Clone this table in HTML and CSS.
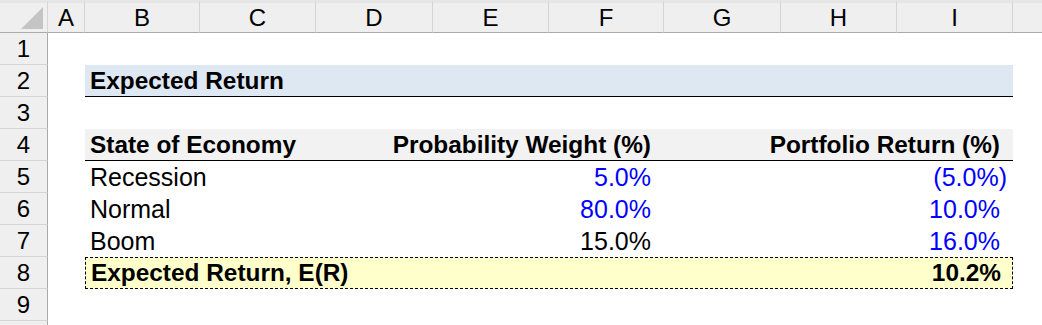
FILE: index.html
```html
<!DOCTYPE html>
<html lang="en">
<head>
<meta charset="utf-8">
<title>Expected Return</title>
<link rel="stylesheet" href="styles.css">
</head>
<body>
<div class="sheet">
  <div class="corner"><span class="tri"></span></div>
  <div class="colhead">A</div>
  <div class="colhead">B</div>
  <div class="colhead">C</div>
  <div class="colhead">D</div>
  <div class="colhead">E</div>
  <div class="colhead">F</div>
  <div class="colhead">G</div>
  <div class="colhead">H</div>
  <div class="colhead">I</div>
  <div class="colhead last"></div>

  <div class="rowhead r1">1</div>
  <div class="rowhead r2">2</div>
  <div class="rowhead r3">3</div>
  <div class="rowhead r4">4</div>
  <div class="rowhead r5">5</div>
  <div class="rowhead r6">6</div>
  <div class="rowhead r7">7</div>
  <div class="rowhead r8">8</div>
  <div class="rowhead r9">9</div>
  <div class="rowhead r10"></div>

  <div class="band title r2">
    <div class="cell bold">Expected Return</div>
  </div>

  <div class="band trow head r4">
    <div class="cell bold">State of Economy</div>
    <div class="cell bold num">Probability Weight (%)</div>
    <div class="cell bold num">Portfolio Return (%)</div>
  </div>

  <div class="band trow r5">
    <div class="cell">Recession</div>
    <div class="cell num blue">5.0%</div>
    <div class="cell num neg blue">(5.0%)</div>
  </div>

  <div class="band trow r6">
    <div class="cell">Normal</div>
    <div class="cell num blue">80.0%</div>
    <div class="cell num blue">10.0%</div>
  </div>

  <div class="band trow r7">
    <div class="cell">Boom</div>
    <div class="cell num">15.0%</div>
    <div class="cell num blue">16.0%</div>
  </div>

  <div class="band trow total r8">
    <div class="cell bold">Expected Return, E(R)</div>
    <div class="cell num"></div>
    <div class="cell bold num">10.2%</div>
  </div>
</div>
</body>
</html>
```

FILE: styles.css
```css
html, body {
  margin: 0;
  padding: 0;
  background: #ffffff;
}

body {
  width: 1042px;
  height: 325px;
  overflow: hidden;
  font-family: "Liberation Sans", Arial, sans-serif;
  color: #000000;
}

.sheet {
  display: grid;
  grid-template-columns: 48px 37px 115px 116px 117px 116px 115px 117px 116px 116px 1fr;
  grid-template-rows: 33px repeat(9, 32px) 1fr;
  width: 1042px;
  height: 325px;
}

.corner {
  position: relative;
  background: #efefef;
  border-top: 3px solid #e6e6e6;
  border-right: 1px solid #d6d6d6;
  border-bottom: 1px solid #ababab;
  box-sizing: border-box;
}

.tri {
  position: absolute;
  right: 4px;
  bottom: 3px;
  width: 0;
  height: 0;
  border-left: 22px solid transparent;
  border-bottom: 22px solid #c4c4c4;
}

.colhead {
  background: #efefef;
  border-top: 3px solid #e6e6e6;
  border-right: 1px solid #d4d4d4;
  border-bottom: 1px solid #ababab;
  box-sizing: border-box;
  font-size: 24px;
  line-height: 29px;
  text-align: center;
  color: #000;
}

.colhead.last {
  border-right: none;
}

.rowhead {
  grid-column: 1;
  background: #efefef;
  border-right: 1px solid #a9a9a9;
  border-bottom: 1px solid #d4d4d4;
  box-sizing: border-box;
  font-size: 24px;
  line-height: 31px;
  text-align: center;
  color: #000;
}

.r1 { grid-row: 2; }
.r2 { grid-row: 3; }
.r3 { grid-row: 4; }
.r4 { grid-row: 5; }
.r5 { grid-row: 6; }
.r6 { grid-row: 7; }
.r7 { grid-row: 8; }
.r8 { grid-row: 9; }
.r9 { grid-row: 10; }
.r10 { grid-row: 11; border-bottom: none; }

.band {
  grid-column: 3 / 11;
  box-sizing: border-box;
  font-size: 25px;
  line-height: 32px;
  white-space: nowrap;
}

.title {
  background: #dde8f3;
  border-bottom: 1px solid #000;
  line-height: 31px;
}

.trow {
  display: grid;
  grid-template-columns: 231px 348px 349px;
}

.head {
  background: #f2f2f2;
  border-bottom: 1px solid #000;
  line-height: 31px;
}

.total {
  background: #ffffcc;
  border: 1px dashed #000;
  line-height: 30px;
}

.cell {
  padding-left: 5px;
  overflow: visible;
}

.num {
  text-align: right;
  padding-left: 0;
  padding-right: 13px;
}

.num.neg {
  padding-right: 6px;
}

.total .num {
  padding-right: 13px;
}

.bold {
  font-weight: bold;
  font-size: 24.4px;
}

.blue {
  color: #0000ff;
}
```
